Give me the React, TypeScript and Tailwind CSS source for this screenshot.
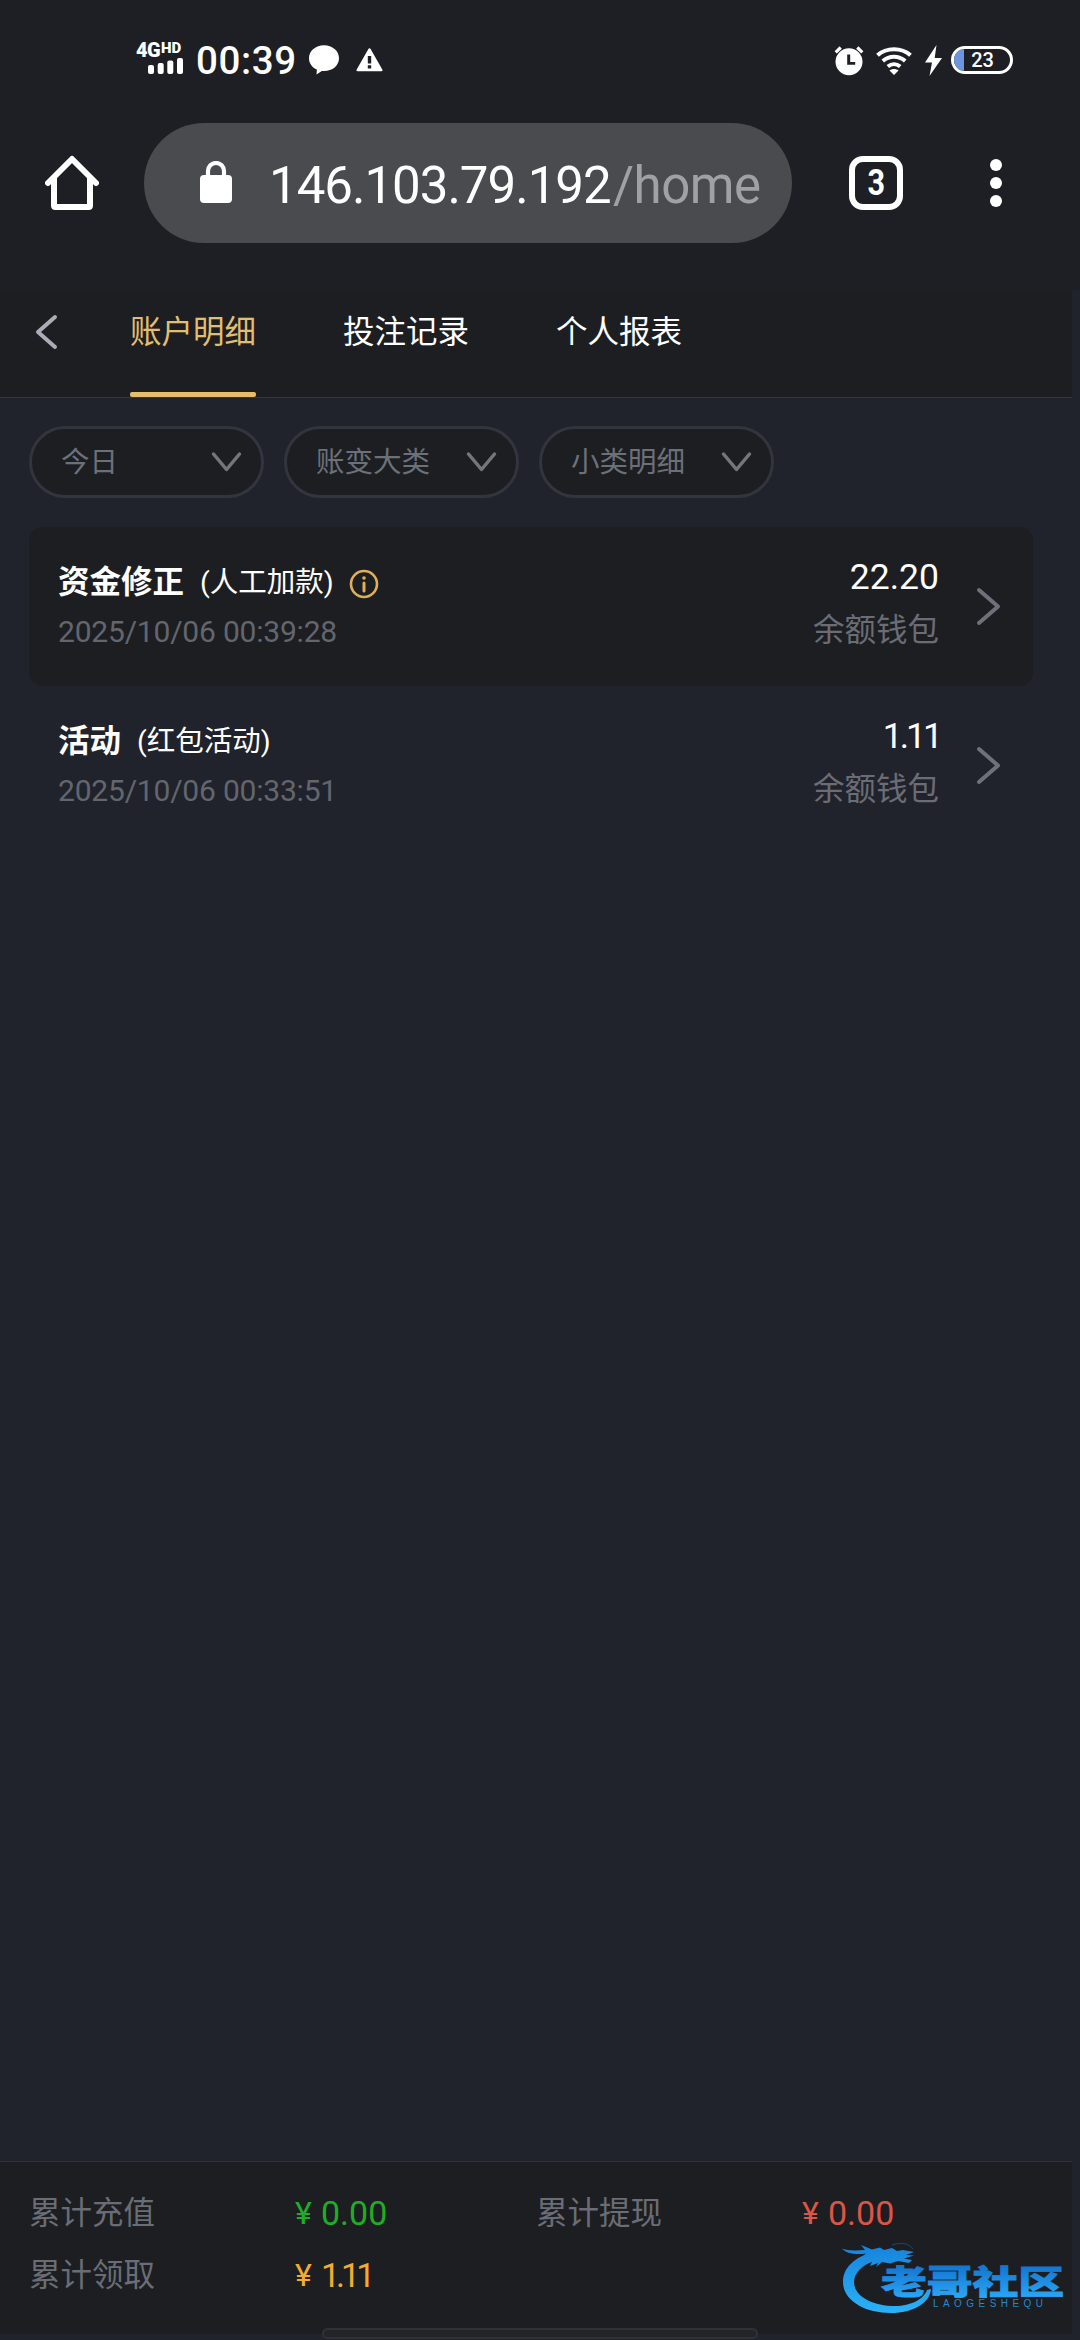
import { clsx } from "clsx";

interface HistoryRow {
  id: string;
  title: string;
  detail: string;
  time: string;
  amount: string;
  wallet: string;
  hasInfo?: boolean;
}

const tabs = ["账户明细", "投注记录", "个人报表"];

const filters = ["今日", "账变大类", "小类明细"];

const rows: HistoryRow[] = [
  {
    id: "fix",
    title: "资金修正",
    detail: "(人工加款)",
    time: "2025/10/06 00:39:28",
    amount: "22.20",
    wallet: "余额钱包",
    hasInfo: true,
  },
  {
    id: "promo",
    title: "活动",
    detail: "(红包活动)",
    time: "2025/10/06 00:33:51",
    amount: "1.11",
    wallet: "余额钱包",
  },
];

const totals = [
  { label: "累计充值", value: "0.00", color: "text-[#1eae25]" },
  { label: "累计提现", value: "0.00", color: "text-[#dc5546]" },
  { label: "累计领取", value: "1.11", color: "text-[#f3ab2d] tracking-[-4px]" },
];

const StatusBar = () => (
  <div className="flex h-[120px] items-start pt-[43px] pl-[136px] text-white">
    <div className="flex w-[48px] flex-col">
      <div className="flex h-[15px] items-start font-black">
        <span className="w-[25px] text-[20px] leading-[15px] tracking-[-0.5px]">4G</span>
        <span className="text-[15px] leading-[10px]">HD</span>
      </div>
      <svg className="ml-3 h-[16px] w-[35px]" viewBox="0 0 35 16" fill="currentColor">
        <rect x="0" y="7" width="6" height="9" rx="2" />
        <rect x="9.7" y="5" width="6" height="11" rx="2" />
        <rect x="19.3" y="2.5" width="6" height="13.5" rx="2" />
        <rect x="29" y="0" width="6" height="16" rx="2" />
      </svg>
    </div>
    <span className="ml-3 w-[101px] text-[38.5px] leading-[35px] font-medium tracking-[0.6px]">00:39</span>
    <svg className="mt-[2px] ml-3 h-[30px] w-[30px]" viewBox="0 0 30 30" fill="currentColor">
      <path d="M15 0.3c8.3 0 15 5.6 15 12.9S23.500 26 15 26l-2.200-.1L7.500 29.500l.4-4.900C3.200 22.500 0 18.300 0 13.200 0 5.900 6.700.3 15 .3Z" />
    </svg>
    <svg className="mt-[5px] ml-[17px] h-[24px] w-[27px]" viewBox="0 0 27 24" fill="currentColor">
      <path fillRule="evenodd" d="M13.500.3c.5 0 .8.300 1.100.8L26.300 21.500c.6 1 .1 1.700-.9 1.700H1.600c-1 0-1.500-.7-.9-1.700L12.400 1.100c.3-.5.6-.8 1.100-.8ZM11.800 8v7.500h3.400V8Zm0 9.300v3.200h3.400v-3.200Z" />
    </svg>
    <svg className="mt-[3px] ml-[451px] h-[30px] w-[30px]" viewBox="0 0 30 30" fill="currentColor">
      <path fillRule="evenodd" d="M15 2.200a13.500 13.500 0 1 1 0 27 13.500 13.500 0 0 1 0-27ZM13.200 8.500v10.300h8v-2.900h-5V8.500Z" />
      <path d="M1.700 6.300 6.700 1.500M28.300 6.300l-5-4.800" stroke="currentColor" strokeWidth="3.200" />
    </svg>
    <svg className="mt-[3px] ml-[12px] h-[30px] w-[36px]" viewBox="0 0 36 30" fill="none" stroke="currentColor" strokeWidth="4">
      <path d="M1.500 9.200C10.500 1.200 25.500 1.200 34.500 9.200" />
      <path d="M6.800 15c6.500-5.600 15.900-5.600 22.400 0" />
      <path d="M11.800 20.500c3.700-3 8.700-3 12.400 0" />
      <path d="M13.500 24.500c2.500-2 6.500-2 9 0L18 29Z" fill="currentColor" stroke="none" />
    </svg>
    <svg className="mt-[2px] ml-[13px] h-[31px] w-[17px]" viewBox="0 0 17 31" fill="currentColor">
      <path d="M11.500 0 0 17.500h7L4.500 31 17 13H9.700Z" />
    </svg>
    <div className="mt-[3px] ml-[9px] flex h-[28px] w-[62px] overflow-hidden rounded-full border-[3px] border-white">
      <div className="w-[10px] bg-[#6d94de]" />
      <span className="w-[37px] text-center text-[20px] leading-[23px] font-medium">23</span>
    </div>
  </div>
);

const BrowserBar = () => (
  <div className="flex h-[170px] items-start pl-[45px] text-white">
    <svg className="mt-[35px] h-[56px] w-[54px]" viewBox="0 0 54 56" fill="none" stroke="currentColor" strokeWidth="6" strokeLinecap="round" strokeLinejoin="round">
      <path d="M3 28 27 4l24 24" />
      <path d="M9 24v26.500q0 1.500 1.500 1.500h33q1.500 0 1.500-1.500V24" />
    </svg>
    <div className="mt-[3px] ml-[45px] flex h-[120px] w-[648px] items-center rounded-full bg-[#4a4b4f] pl-[56px]">
      <svg className="-mt-0.5 h-[42px] w-[32px]" viewBox="0 0 32 42">
        <rect y="14" width="32" height="28" rx="4" fill="currentColor" />
        <path d="M8 16v-6a8 8 0 0 1 16 0v6" fill="none" stroke="currentColor" strokeWidth="4.200" />
      </svg>
      <div className="mt-[6px] ml-[37px] flex text-[51px] leading-[60px] whitespace-nowrap">
        <span className="w-[344px] tracking-[-1px]">146.103.79.192</span>
        <span className="tracking-[-0.500px] text-[#a0a1a4]">/home</span>
      </div>
    </div>
    <div className="mt-[36px] ml-[57px] flex h-[54px] w-[54px] items-center justify-center rounded-[14px] border-[6px] border-white text-[36px] leading-none font-bold">
      <span className="scale-x-85">3</span>
    </div>
    <div className="mt-[39px] ml-[87px] flex flex-col gap-[6px]">
      <i className="size-3 rounded-full bg-white" />
      <i className="size-3 rounded-full bg-white" />
      <i className="size-3 rounded-full bg-white" />
    </div>
  </div>
);

const TabHeader = () => (
  <header className="flex h-[108px] w-[1072px] border-b border-[#35363a] bg-[#1d1e22]">
    <svg className="mt-[23px] ml-[35px] h-[38px] w-[23px]" viewBox="0 0 23 38" fill="none" stroke="#a9adb6" strokeWidth="4" strokeLinecap="round" strokeLinejoin="round">
      <path d="M20 4 3 19l17 15" />
    </svg>
    <nav className="ml-[72px] flex gap-[87px]">
      {tabs.map((tab, i) => (
        <div
          key={tab}
          className={clsx(
            "flex w-[126px] flex-col justify-between text-[31.5px]",
            i === 0 ? "text-[#e2be6e]" : "text-white",
          )}
        >
          <span className="mt-[18px] leading-[50px] whitespace-nowrap">{tab}</span>
          {i === 0 && <i className="h-[5px] rounded-[2px] bg-[#e4be6a]" />}
        </div>
      ))}
    </nav>
  </header>
);

const FilterBar = () => (
  <div className="flex gap-5 pt-[28px] pl-[29px]">
    {filters.map((name) => (
      <button
        key={name}
        className="flex h-[72px] w-[235px] items-center justify-between rounded-full border-[3px] border-[#32353d] bg-[#1d1e22] pr-[19px] pl-[29px] text-[28.5px] text-[#6c7078]"
      >
        <span className="pt-[2px]">{name}</span>
        <svg className="h-[22px] w-[31px]" viewBox="0 0 31 22" fill="none" stroke="#73767d" strokeWidth="3.500" strokeLinecap="round" strokeLinejoin="round">
          <path d="M2.500 3 15.500 18.500 28.500 3" />
        </svg>
      </button>
    ))}
  </div>
);

const HistoryItem = ({ row, active }: { row: HistoryRow; active: boolean }) => (
  <div className={clsx("flex h-[159px] rounded-[14px] pl-[29px]", active && "bg-[#1d1e22]")}>
    <div className="flex-1 pt-[32px]">
      <div className="flex h-[48px] items-center text-white">
        <span className="text-[31.5px] font-bold">{row.title}</span>
        <span className="ml-[16px] text-[28.5px]">{row.detail}</span>
        {row.hasInfo && (
          <svg className="mt-[2px] ml-[15px] h-[30px] w-[30px]" viewBox="0 0 30 30" fill="none" stroke="#dfae58">
            <circle cx="15" cy="15" r="13" strokeWidth="2.600" />
            <path d="M15 14v8" strokeWidth="3" strokeLinecap="round" />
            <circle cx="15" cy="9" r="1.800" fill="#dfae58" stroke="none" />
          </svg>
        )}
      </div>
      <p className="text-[30px] leading-[50px] tracking-[-0.200px] text-[#63666d]">{row.time}</p>
    </div>
    <div className="pt-[27px] text-right">
      <p className={clsx("text-[35.500px] leading-[46px] text-white", row.amount === "1.11" && "-mr-px tracking-[-3px]")}>
        {row.amount}
      </p>
      <p className="text-[31.5px] leading-[61px] text-[#6a6d75]">{row.wallet}</p>
    </div>
    <svg className="mt-[59px] mr-[32px] ml-[37px] h-[41px] w-[25px]" viewBox="0 0 25 41" fill="none" stroke="#6e7179" strokeWidth="4" strokeLinecap="round" strokeLinejoin="round">
      <path d="M3 4 22 20.500 3 37" />
    </svg>
  </div>
);

const Watermark = () => (
  <svg className="absolute top-[2235px] left-[830px] h-[90px] w-[250px]" viewBox="0 0 250 90">
    <defs>
      <linearGradient id="wm" gradientUnits="userSpaceOnUse" x1="0" y1="10" x2="0" y2="78">
        <stop offset="0" stopColor="#1783dc" />
        <stop offset="1" stopColor="#29b2f8" />
      </linearGradient>
      <linearGradient id="wmText" gradientUnits="userSpaceOnUse" x1="0" y1="32" x2="0" y2="62">
        <stop offset="0" stopColor="#1377d2" />
        <stop offset="1" stopColor="#2ba5f3" />
      </linearGradient>
    </defs>
    {/* dragon body */}
    <path
      fill="url(#wm)"
      d="M44 17C24 22 13 33 13 47c0 18 21 31 48 31 22 0 39-10 40-24l-4 1c-3 9-16 16-32 16-23 0-41-10-41-24 0-9 8-17 22-22Z"
    />
    {/* dragon head, horns and whiskers */}
    <path
      fill="url(#wm)"
      d="M12 13.500C18 16 27 15.500 35 15L31 10 42 14.500 50 12.500 54 15 62 13 67 16 73 15 84 17 76 20 84 20.500 74 23.500 82 25 79 28 68 26 60 28.500 52 27 46 32 48 28 40 31 42 27 34 29 38 24 28 25 36 18.500C26 20 16 18.500 12 13.500Z"
    />
    <path d="M62 10c8-3 17-2 21 4" fill="none" stroke="#164a70" strokeWidth="1" />
    <text x="51" y="58.500" fontSize="33" fontWeight="900" textLength="183" lengthAdjust="spacingAndGlyphs" fill="url(#wmText)" stroke="url(#wmText)" strokeWidth="0.8">
      老哥社区
    </text>
    <text x="103" y="72" fontSize="10" fill="#2388cc" textLength="110" fontFamily="Liberation Sans, sans-serif">
      LAOGESHEQU
    </text>
  </svg>
);

export default function App() {
  return (
    <div className="relative flex h-[2340px] w-[1080px] flex-col overflow-hidden bg-[#20232b] font-['Roboto','Noto_Sans_CJK_SC',sans-serif]">
      <div className="bg-[#1e1f24]">
        <StatusBar />
        <BrowserBar />
      </div>
      <TabHeader />
      <FilterBar />
      <main className="mt-[29px] ml-[29px] w-[1004px] flex-1">
        {rows.map((row, i) => (
          <HistoryItem key={row.id} row={row} active={i % 2 === 0} />
        ))}
      </main>
      <footer className="mb-[6px] grid h-[173px] w-[1072px] grid-cols-[507px_1fr] content-start border-t border-[#2b3539] bg-[#1d1e22] pt-[20px] pl-[29px]">
        {totals.map((total) => (
          <div key={total.label} className="flex h-[62px] items-center">
            <span className="w-[266px] pt-[2px] text-[31.5px] text-[#6a6d75]">{total.label}</span>
            <span className={clsx("flex items-center text-[34px]", total.color)}>
              <span className="w-[26px] text-[32px]">¥</span>
              {total.value}
            </span>
          </div>
        ))}
      </footer>
      <div className="absolute top-[2328px] left-[322px] h-[11px] w-[436px] rounded-full border-2 border-[#2f3137] bg-[#232428]" />
      <Watermark />
    </div>
  );
}
